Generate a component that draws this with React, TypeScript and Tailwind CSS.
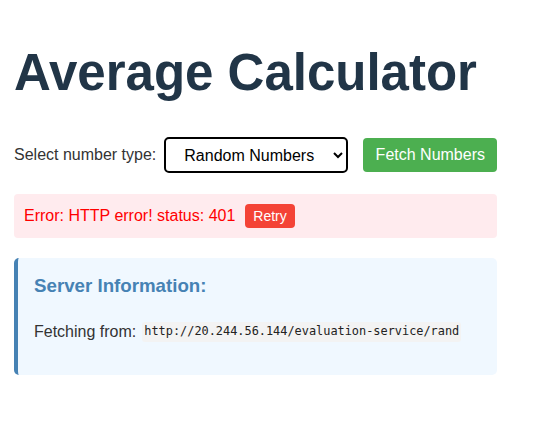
export default function App() {
  return (
    <div className="min-h-screen bg-white font-['Liberation_Sans',Arial,sans-serif]">
      <div className="ml-[14px] w-[483px] pt-[47px]">
        <h1 className="text-[51px] leading-none font-bold text-[#213547]">
          Average Calculator
        </h1>

        <div className="mt-[39px] flex items-center whitespace-nowrap">
          <label className="shrink-0 text-[16px] text-[#333]">Select number type:</label>
          <select
            defaultValue="r"
            className="ml-[8px] h-[36px] w-[184px] shrink-0 rounded-[5px] border-2 border-black bg-white px-[14px] text-[16px] text-black"
          >
            <option value="r">Random Numbers</option>
            <option value="p">Prime Numbers</option>
            <option value="f">Fibonacci Numbers</option>
            <option value="e">Even Numbers</option>
          </select>
          <button className="ml-[15px] h-[34px] w-[134px] shrink-0 rounded-[4px] bg-[#4caf50] text-[16px] text-white">
            Fetch Numbers
          </button>
        </div>

        <div className="mt-[21px] flex h-[44px] items-center rounded-[4px] bg-[#ffebee] px-[10px]">
          <span className="text-[16px] text-[#ff0000]">Error: HTTP error! status: 401</span>
          <button className="ml-[10px] h-[24px] rounded-[4px] bg-[#f44336] px-[8px] text-[14px] text-white">
            Retry
          </button>
        </div>

        <div className="mt-[20px] h-[117px] rounded-[5px] border-l-4 border-[#4682b4] bg-[#f0f8ff] pl-[16px] pt-[14px]">
          <h3 className="text-[18.72px] font-bold text-[#4682b4]">Server Information:</h3>
          <p className="mt-[20px] flex items-center text-[16px] text-[#333]">
            Fetching from:
            <code className="ml-[6px] rounded-[3px] bg-[#f3f3f3] px-[2px] py-[1px] font-['DejaVu_Sans_Mono',monospace] text-[11.9px] text-[#222]">
              http://20.244.56.144/evaluation-service/rand
            </code>
          </p>
        </div>
      </div>
    </div>
  );
}
